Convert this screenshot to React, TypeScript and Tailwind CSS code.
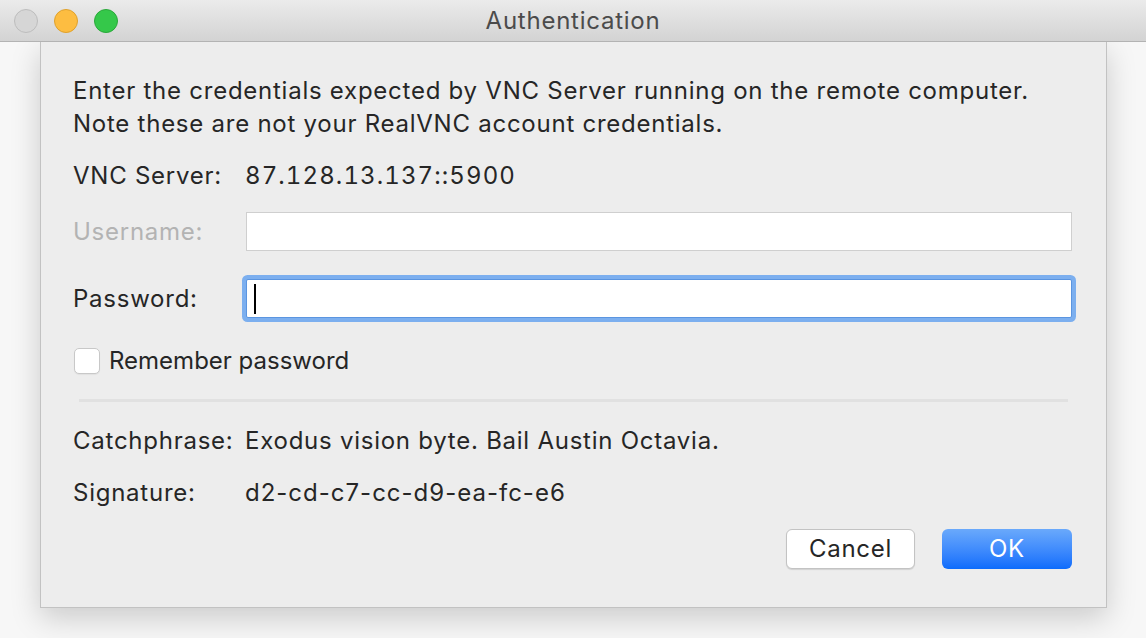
import React from "react";

const font = { fontFamily: "Inter, 'Noto Sans', sans-serif" };
const tnum = { fontFeatureSettings: "'tnum' 1" };

export default function App() {
  return (
    <div className="w-[1146px] h-[638px] bg-[#f7f7f7] flex flex-col overflow-hidden text-[#262626] tracking-[0.75px]" style={font}>
      <div className="h-[42px] shrink-0 bg-gradient-to-b from-[#ebebeb] to-[#d3d3d3] border-b border-[#b3b3b3] flex items-center relative">
        <div className="flex items-center gap-[16px] pl-[14px]">
          <div className="w-[24px] h-[24px] rounded-full border border-[#bdbdbd] bg-[#d6d6d6]" />
          <div className="w-[24px] h-[24px] rounded-full border border-[#dfa12c] bg-[#fdbd41]" />
          <div className="w-[24px] h-[24px] rounded-full border border-[#2aa83a] bg-[#35c84a]" />
        </div>
        <div className="absolute inset-0 flex items-center justify-center text-[24px] text-[#4b4b4b]">Authentication</div>
      </div>
      <div className="flex-1 pl-[40px]">
        <div className="w-[1067px] h-[566px] bg-[#ededed] border-x border-b border-[#c2c2c2] shadow-[0_10px_28px_rgba(0,0,0,0.18)] flex flex-col pl-[32px] pr-[34px] pt-[32px] text-[24px]">
          <div className="leading-[33px]">
            <div className="whitespace-nowrap">Enter the credentials expected by VNC Server running on the remote computer.</div>
            <div>Note these are not your RealVNC account credentials.</div>
          </div>
          <div className="mt-[16px] h-[40px] flex items-center">
            <div className="w-[172px]">VNC Server:</div>
            <div style={tnum} className="tracking-[1.1px]">87.128.13.137::5900</div>
          </div>
          <div className="mt-[16px] h-[39px] flex items-center">
            <div className="w-[173px] text-[#b3b3b3]">Username:</div>
            <div className="w-[828px] h-[39px] bg-white border border-[#cfcfcf]" />
          </div>
          <div className="mt-[28px] h-[39px] flex items-center">
            <div className="w-[173px]">Password:</div>
            <div className="w-[828px] h-[39px] bg-white border border-[#5b95e0] ring-[4px] ring-[#7cafef] rounded-[2px] flex items-center pl-[7px]">
              <div className="w-[2px] h-[30px] bg-black" />
            </div>
          </div>
          <div className="mt-[30px] h-[26px] flex items-center">
            <div className="ml-[1px] w-[26px] h-[26px] bg-white border border-[#c8c8c8] rounded-[5px] shadow-[0_1px_1px_rgba(0,0,0,0.05)]" />
            <div className="ml-[9px] tracking-[0px]">Remember password</div>
          </div>
          <div className="mt-[25px] ml-[6px] mr-[4px] h-[3px] bg-[#e1e1e1]" />
          <div className="mt-[19px] h-[40px] flex items-center">
            <div className="w-[172px]">Catchphrase:</div>
            <div>Exodus vision byte. Bail Austin Octavia.</div>
          </div>
          <div className="mt-[12px] h-[40px] flex items-center">
            <div className="w-[172px]">Signature:</div>
            <div className="tracking-[1px]">d2-cd-c7-cc-d9-ea-fc-e6</div>
          </div>
          <div className="mt-[16px] flex justify-end gap-[27px]">
            <div className="w-[129px] h-[40px] bg-white border border-[#c3c3c3] rounded-[6px] shadow-[0_1px_1px_rgba(0,0,0,0.12)] flex items-center justify-center">Cancel</div>
            <div className="w-[130px] h-[40px] rounded-[6px] bg-gradient-to-b from-[#6aa9fb] to-[#0b6cfc] text-white flex items-center justify-center">OK</div>
          </div>
        </div>
      </div>
    </div>
  );
}
